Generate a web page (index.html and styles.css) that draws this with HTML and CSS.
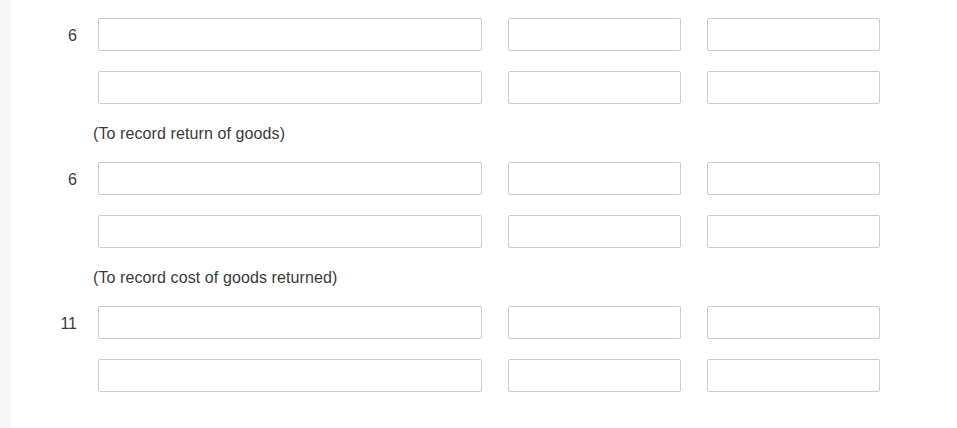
FILE: index.html
```html
<!DOCTYPE html>
<html>
<head>
<meta charset="utf-8">
<link rel="stylesheet" href="styles.css">
</head>
<body>
<div class="page">
  <div class="strip"></div>
  <div class="content">
    <div class="entry">
      <div class="row">
        <span class="label">6</span>
        <input class="field wide" type="text">
        <input class="field" type="text">
        <input class="field" type="text">
      </div>
      <div class="row second">
        <span class="label"></span>
        <input class="field wide" type="text">
        <input class="field" type="text">
        <input class="field" type="text">
      </div>
      <div class="note">(To record return of goods)</div>
    </div>
    <div class="entry">
      <div class="row">
        <span class="label">6</span>
        <input class="field wide" type="text">
        <input class="field" type="text">
        <input class="field" type="text">
      </div>
      <div class="row second">
        <span class="label"></span>
        <input class="field wide" type="text">
        <input class="field" type="text">
        <input class="field" type="text">
      </div>
      <div class="note">(To record cost of goods returned)</div>
    </div>
    <div class="entry">
      <div class="row">
        <span class="label">11</span>
        <input class="field wide" type="text">
        <input class="field" type="text">
        <input class="field" type="text">
      </div>
      <div class="row second">
        <span class="label"></span>
        <input class="field wide" type="text">
        <input class="field" type="text">
        <input class="field" type="text">
      </div>
    </div>
  </div>
</div>
</body>
</html>
```
FILE: styles.css
```css
html, body {
  margin: 0;
  padding: 0;
  background: #ffffff;
}
body {
  font-family: "Liberation Sans", Arial, sans-serif;
  color: #3a3a3a;
  font-size: 16px;
}
.page {
  display: flex;
  width: 957px;
  height: 428px;
  overflow: hidden;
}
.strip {
  width: 11px;
  flex: none;
  background: #f7f7f7;
}
.content {
  flex: 1;
  padding-top: 18px;
  display: flex;
  flex-direction: column;
}
.entry {
  display: flex;
  flex-direction: column;
}
.row {
  display: flex;
  align-items: center;
  height: 33px;
  margin-bottom: 20px;
}
.row.second {
  margin-bottom: 0;
}
.label {
  width: 66px;
  margin-right: 21px;
  padding-top: 2px;
  text-align: right;
  flex: none;
}
.field {
  box-sizing: border-box;
  width: 173px;
  height: 33px;
  margin: 0 26px 0 0;
  padding: 0 6px;
  border: 1px solid #cccccc;
  border-radius: 2px;
  background: #ffffff;
  flex: none;
  font: inherit;
}
.field.wide {
  width: 384px;
}
.note {
  height: 20px;
  line-height: 20px;
  margin: 20px 0 18px 82px;
  letter-spacing: 0.1px;
}
```
